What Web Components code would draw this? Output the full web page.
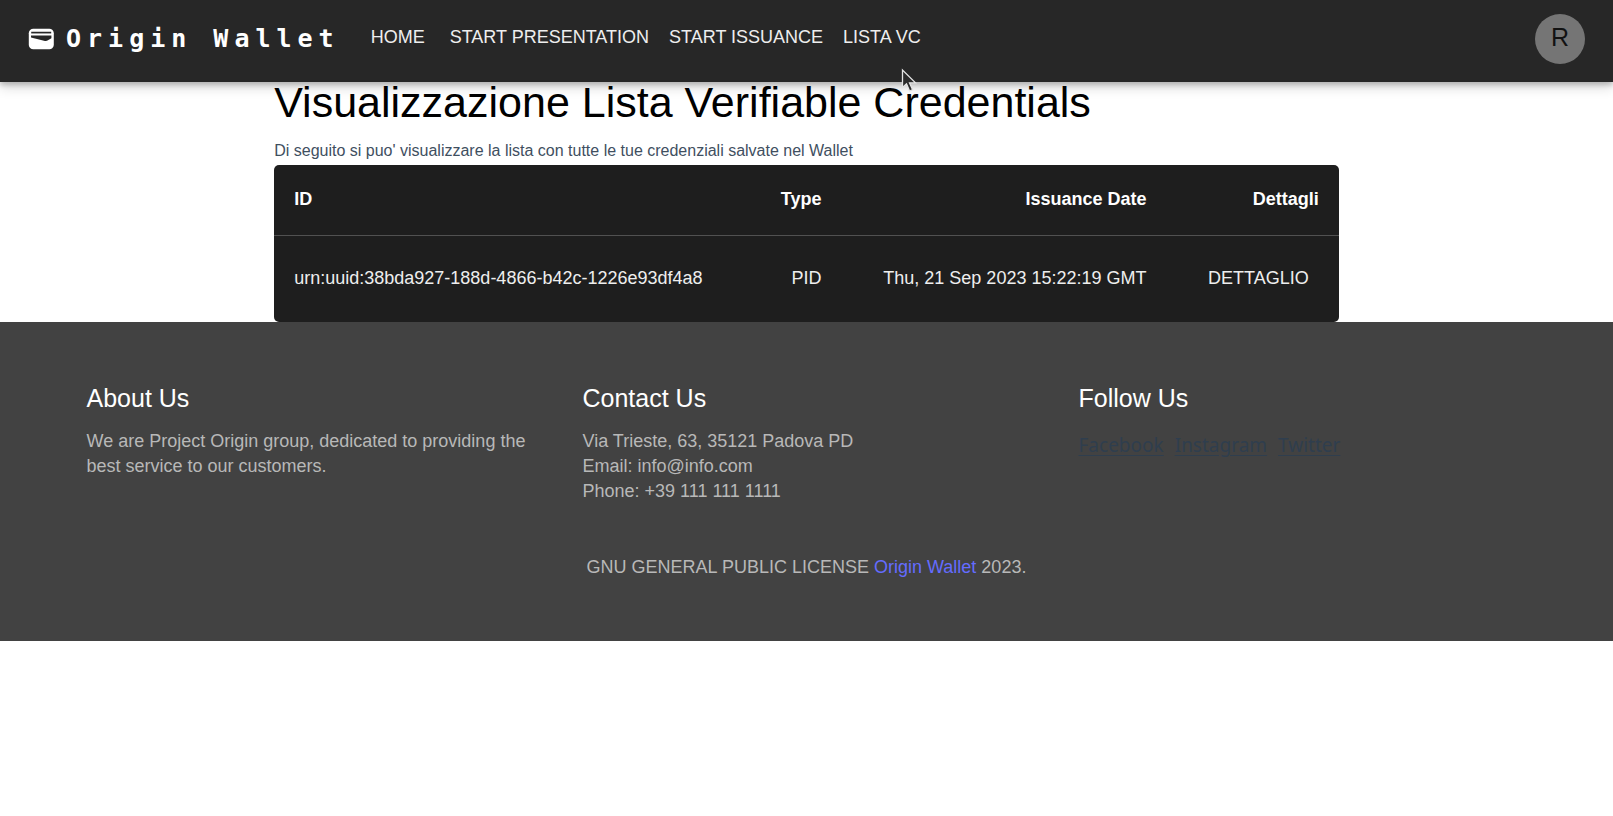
<!DOCTYPE html>
<html lang="it">
<head>
<meta charset="utf-8">
<title>Origin Wallet</title>
<style>
  html, body { margin: 0; }
  body { background: #fff; font: 18px/25px "Liberation Sans", Arial, sans-serif; color: #000; }
</style>
</head>
<body>
<wallet-app></wallet-app>

<template id="tpl-button">
  <style>
    :host { display: inline-flex; min-width: var(--button-min, 0); }
    button { flex: 1; height: 46px; margin: 0; padding: 0 10px; border: 0; background: none; color: inherit; font: inherit; text-align: var(--button-align, center); text-transform: uppercase; white-space: nowrap; cursor: pointer; }
  </style>
  <button type="button"><slot></slot></button>
</template>

<template id="tpl-header">
  <style>
    :host { display: block; position: relative; z-index: 1; background: #272727; color: #fff; padding: 0 28px 4px; box-shadow: 0 3px 5px rgba(0,0,0,.2), 0 5px 12px rgba(0,0,0,.16); }
    .bar { display: flex; align-items: center; min-height: 78px; }
    .brand { display: flex; align-items: center; gap: 12px; color: #fff; text-decoration: none; font: bold 25px/32px "DejaVu Sans Mono", monospace; letter-spacing: 6px; white-space: nowrap; }
    svg { width: 26px; height: 22px; display: block; }
    nav { display: flex; margin-left: 16px; padding-bottom: 4px; color: #eee; }
    .home { --button-min: 84px; }
    .avatar { margin-left: auto; width: 50px; height: 50px; padding: 0 0 4px; border: 0; border-radius: 50%; background: #757575; color: #121212; font: 25px/46px "Liberation Sans", Arial, sans-serif; cursor: pointer; }
  </style>
  <div class="bar">
    <a class="brand" href="#">
      <svg viewBox="0 0 26 22" aria-hidden="true">
        <rect x="0.8" y="0.8" width="25" height="20.4" rx="4.5" fill="#fff"/>
        <path d="M3.2 4.6H23.2" stroke="#272727" stroke-width="1.7"/>
        <path d="M3 7.4H23.4V10.2L19.5 12.6Q18.4 13.3 17 12.9L3 9.6Z" fill="#272727"/>
      </svg>
      <span>Origin Wallet</span>
    </a>
    <nav>
      <wallet-button class="home">Home</wallet-button>
      <wallet-button>Start Presentation</wallet-button>
      <wallet-button>Start Issuance</wallet-button>
      <wallet-button>Lista VC</wallet-button>
    </nav>
    <button class="avatar" type="button">R</button>
  </div>
</template>

<template id="tpl-credentials">
  <style>
    :host { display: block; width: 66%; margin: 0 auto; }
    h1 { margin: 0 0 16px; font-weight: 400; font-size: 43px; line-height: 40px; }
    p { margin: 0; padding-bottom: 2px; font-size: 16px; line-height: 25px; color: #3f4f5f; }
    table { width: 100%; border-collapse: separate; border-spacing: 0; background: #1e1e1e; color: #eee; border-radius: 5px; white-space: nowrap; }
    th, td { padding: 19px 20px 21px; text-align: right; }
    th { line-height: 30px; color: #fff; border-bottom: 1px solid #515151; }
    th:first-child, td:first-child { text-align: left; }
    wallet-button { display: flex; --button-align: right; }
  </style>
  <h1>Visualizzazione Lista Verifiable Credentials</h1>
  <p>Di seguito si puo' visualizzare la lista con tutte le tue credenziali salvate nel Wallet</p>
  <table>
    <thead><tr><th scope="col">ID</th><th scope="col">Type</th><th scope="col">Issuance Date</th><th scope="col">Dettagli</th></tr></thead>
    <tbody><tr><td>urn:uuid:38bda927-188d-4866-b42c-1226e93df4a8</td><td>PID</td><td>Thu, 21 Sep 2023 15:22:19 GMT</td><td><wallet-button>Dettaglio</wallet-button></td></tr></tbody>
  </table>
</template>

<template id="tpl-column">
  <style>
    :host { display: block; }
    h2 { margin: 0 0 15px; font-weight: 400; font-size: 25px; line-height: 32px; color: #fff; }
  </style>
  <h2><slot name="title"></slot></h2>
  <slot></slot>
</template>

<template id="tpl-footer">
  <style>
    :host { display: block; background: #424242; color: #b8b8b8; padding: 60px 24px 61px; }
    .columns { display: grid; grid-template-columns: repeat(3, 1fr); gap: 48px; max-width: 1440px; margin: 0 auto 51px; }
    p { margin: 0; }
    .social { display: flex; gap: 11px; font: 19px/33px "Noto Sans", sans-serif; }
    .social a { color: #2f3e4e; text-underline-offset: 3px; }
    .license { text-align: center; }
    .license a { color: #646cff; text-decoration: none; }
  </style>
  <div class="columns">
    <footer-column><span slot="title">About Us</span>
      <p>We are Project Origin group, dedicated to providing the best service to our customers.</p></footer-column>
    <footer-column><span slot="title">Contact Us</span>
      <p>Via Trieste, 63, 35121 Padova PD</p><p>Email: info@info.com</p><p>Phone: +39 111 111 1111</p></footer-column>
    <footer-column><span slot="title">Follow Us</span>
      <div class="social"><a href="#">Facebook</a><a href="#">Instagram</a><a href="#">Twitter</a></div></footer-column>
  </div>
  <p class="license">GNU GENERAL PUBLIC LICENSE <a href="#">Origin Wallet</a> 2023.</p>
</template>

<template id="tpl-pointer">
  <style>
    :host { position: absolute; z-index: 2; left: 901px; top: 68px; pointer-events: none; }
    svg { display: block; width: 17px; height: 26px; }
  </style>
  <svg viewBox="0 0 17 26" aria-hidden="true"><path d="M1.5 2V19.5L5.5 15.8L8.6 23L11.6 21.7L8.5 14.8H14.5Z" fill="#2b2b2b" stroke="#e4e4e4" stroke-width="1.3"/></svg>
</template>

<template id="tpl-app">
  <style>:host { display: block; }</style>
  <wallet-header></wallet-header>
  <main><credential-list></credential-list></main>
  <wallet-footer></wallet-footer>
  <mouse-pointer></mouse-pointer>
</template>

<script>
  const define = (name, template) => customElements.define(name, class extends HTMLElement {
    constructor() {
      super();
      this.attachShadow({ mode: "open" }).append(document.getElementById(template).content.cloneNode(true));
    }
  });
  define("wallet-button", "tpl-button");
  define("wallet-header", "tpl-header");
  define("credential-list", "tpl-credentials");
  define("footer-column", "tpl-column");
  define("wallet-footer", "tpl-footer");
  define("mouse-pointer", "tpl-pointer");
  define("wallet-app", "tpl-app");
</script>
</body>
</html>
